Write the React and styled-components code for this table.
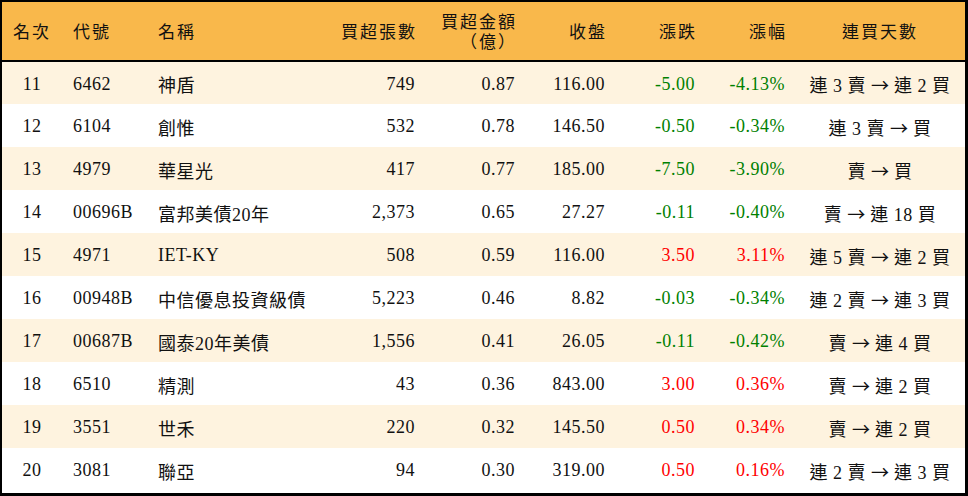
import React from 'react';
import styled, { createGlobalStyle } from 'styled-components';

const GlobalStyle = createGlobalStyle`
    html, body {
        margin: 0;
        padding: 0;
        background: #ffffff;
    }
`;

const Frame = styled.div`
    box-sizing: border-box;
    width: 968px;
    height: 496px;
    border-style: solid;
    border-color: #000;
    border-width: 2px 3px 3px 2px;
    background: #fff;
    overflow: hidden;
    font-family: "Liberation Serif", "Noto Sans CJK TC", serif;
    color: #111;
`;

const Table = styled.table`
    width: 963px;
    border-collapse: collapse;
    table-layout: fixed;
`;

const HeadRow = styled.tr`
    background: #f9b84b;
    height: 59px;
    border-bottom: 2px solid #000;
`;

const Th = styled.th`
    font-weight: normal;
    font-size: 17px;
    letter-spacing: 2px;
    line-height: 20px;
    padding: 3px ${p => (p.$align === 'right' ? '8px' : '0')} 0 ${p => (p.$align === 'left' ? '11px' : '0')};
    text-align: ${p => p.$align || 'center'};
    vertical-align: middle;
`;

const Row = styled.tr`
    height: 43px;
    background: ${p => (p.$odd ? '#fef3df' : '#ffffff')};
`;

const Td = styled.td`
    font-size: 18px;
    letter-spacing: 0.5px;
    padding: 2px ${p => (p.$align === 'right' ? '10px' : '0')} 0 ${p => (p.$align === 'left' ? '11px' : '0')};
    text-align: ${p => p.$align || 'center'};
    vertical-align: middle;
    white-space: nowrap;
    color: ${p => p.$tone === 'up' ? '#ff0000' : p.$tone === 'down' ? '#008000' : '#111'};
`;

const Arrow = styled.span`
    font-family: "Noto Sans CJK TC", sans-serif;
    letter-spacing: 0;
`;

const columns = [
    { key: 'rank', label: '名次', width: 60, align: 'center' },
    { key: 'code', label: '代號', width: 85, align: 'left' },
    { key: 'name', label: '名稱', width: 178, align: 'left' },
    { key: 'lots', label: '買超張數', width: 100, align: 'right' },
    { key: 'amount', label: ['買超金額', '（億）'], width: 100, align: 'right' },
    { key: 'close', label: '收盤', width: 90, align: 'right' },
    { key: 'change', label: '漲跌', width: 90, align: 'right' },
    { key: 'pct', label: '漲幅', width: 90, align: 'right' },
    { key: 'streak', label: '連買天數', width: 170, align: 'center' },
];

const rows = [
    ['11', '6462', '神盾', '749', '0.87', '116.00', '-5.00', '-4.13%', ['連 3 賣', '連 2 買']],
    ['12', '6104', '創惟', '532', '0.78', '146.50', '-0.50', '-0.34%', ['連 3 賣', '買']],
    ['13', '4979', '華星光', '417', '0.77', '185.00', '-7.50', '-3.90%', ['賣', '買']],
    ['14', '00696B', '富邦美債20年', '2,373', '0.65', '27.27', '-0.11', '-0.40%', ['賣', '連 18 買']],
    ['15', '4971', 'IET-KY', '508', '0.59', '116.00', '3.50', '3.11%', ['連 5 賣', '連 2 買']],
    ['16', '00948B', '中信優息投資級債', '5,223', '0.46', '8.82', '-0.03', '-0.34%', ['連 2 賣', '連 3 買']],
    ['17', '00687B', '國泰20年美債', '1,556', '0.41', '26.05', '-0.11', '-0.42%', ['賣', '連 4 買']],
    ['18', '6510', '精測', '43', '0.36', '843.00', '3.00', '0.36%', ['賣', '連 2 買']],
    ['19', '3551', '世禾', '220', '0.32', '145.50', '0.50', '0.34%', ['賣', '連 2 買']],
    ['20', '3081', '聯亞', '94', '0.30', '319.00', '0.50', '0.16%', ['連 2 賣', '連 3 買']],
];

const toneOf = v => (v.startsWith('-') ? 'down' : 'up');

const App = () => {
    return (
        <>
            <GlobalStyle />
            <Frame>
                <Table>
                    <colgroup>
                        {columns.map(c => (
                            <col key={c.key} style={{ width: c.width }} />
                        ))}
                    </colgroup>
                    <thead>
                        <HeadRow>
                            {columns.map(c => (
                                <Th key={c.key} $align={c.align}>
                                    {Array.isArray(c.label) ? (
                                        <>
                                            {c.label[0]}
                                            <br />
                                            {c.label[1]}
                                        </>
                                    ) : (
                                        c.label
                                    )}
                                </Th>
                            ))}
                        </HeadRow>
                    </thead>
                    <tbody>
                        {rows.map((r, i) => (
                            <Row key={r[0]} $odd={i % 2 === 0}>
                                {r.map((v, j) => (
                                    <Td
                                        key={j}
                                        $align={columns[j].align}
                                        $tone={j === 6 || j === 7 ? toneOf(v) : undefined}
                                    >
                                        {Array.isArray(v) ? (
                                            <>
                                                {v[0]} <Arrow>→</Arrow> {v[1]}
                                            </>
                                        ) : (
                                            v
                                        )}
                                    </Td>
                                ))}
                            </Row>
                        ))}
                    </tbody>
                </Table>
            </Frame>
        </>
    );
};

export default App;
